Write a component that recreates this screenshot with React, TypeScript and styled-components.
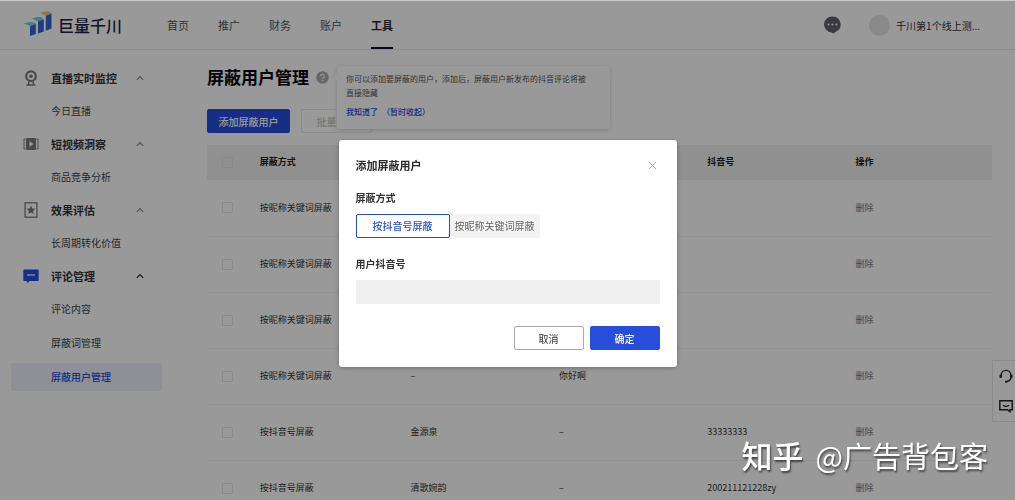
import React, { useState } from 'react';
import styled, { createGlobalStyle } from 'styled-components';

const blue = '#264eda';

const GlobalStyle = createGlobalStyle`
  *, *::before, *::after { box-sizing: border-box; }
  html, body { margin: 0; padding: 0; }
  body, button, input {
    font-family: "Noto Sans CJK SC", "Noto Sans", sans-serif;
  }
  body { background: #fff; color: #333; }
  button { padding: 0; border: 0; background: none; color: inherit; cursor: pointer; }
  legend { padding: 0; }
  a { color: inherit; text-decoration: none; }
  svg { display: block; }
`;

const Page = styled.div`
  height: 100vh;
  overflow: hidden;
  border-top: 1px solid #c6c8c6;
  display: flex;
  flex-direction: column;
`;

const Header = styled.header`
  flex: none;
  height: 49px;
  padding: 0 35px 0 23px;
  display: flex;
  align-items: center;
  border-bottom: 1px solid #eaeaea;
`;

const Brand = styled.a`
  display: flex;
  align-items: center;
  gap: 5px;
  width: 144px;
  font-size: 16px;
  line-height: 24px;
  font-weight: 500;
  color: #1d2440;
  white-space: nowrap;
`;

const Nav = styled.nav`
  flex: 1;
  align-self: stretch;
  display: flex;
  gap: 29px;
`;

const NavLink = styled.a<{ $active?: boolean }>`
  display: flex;
  align-items: center;
  height: 48px;
  font-size: 11px;
  font-weight: ${(p) => (p.$active ? 700 : 400)};
  color: ${(p) => (p.$active ? '#2a2a2e' : '#555')};
  border-top: 2px solid transparent;
  border-bottom: 2px solid ${(p) => (p.$active ? '#0c1030' : 'transparent')};
`;

const Account = styled.div`
  display: flex;
  align-items: center;
  gap: 6px;
  font-size: 10px;
  color: #333;
`;

const MessageButton = styled.button`
  margin-right: 22px;
`;

const Avatar = styled.span`
  width: 21px;
  height: 21px;
  border-radius: 50%;
  background: #e4e4e4;
`;

const Body = styled.div`
  flex: 1;
  min-height: 0;
  display: flex;
`;

const Sidebar = styled.aside`
  flex: none;
  width: 162px;
  padding: 12px 0 0 11px;
`;

const GroupTitle = styled.button`
  width: 100%;
  height: 32px;
  padding: 0 18px 0 12px;
  display: flex;
  align-items: center;
  gap: 12px;
  font-size: 11px;
  font-weight: 700;
  color: #33353a;
`;

const GroupLabel = styled.span`
  flex: 1;
  text-align: left;
`;

const SideLink = styled.a<{ $active?: boolean }>`
  display: flex;
  align-items: center;
  height: 28px;
  margin: 3px 0;
  padding: 0 0 2px 40px;
  border-radius: 2px;
  font-size: 10px;
  font-weight: ${(p) => (p.$active ? 500 : 400)};
  color: ${(p) => (p.$active ? blue : '#444')};
  background: ${(p) => (p.$active ? '#eeeffb' : 'transparent')};

  & + & { margin-top: 6px; }
`;

const Main = styled.main`
  flex: 1;
  min-width: 0;
  padding: 14px 23px 0 45px;
`;

const TitleRow = styled.div`
  position: relative;
  display: flex;
  align-items: center;
  gap: 7px;
  height: 26px;
`;

const Title = styled.h1`
  margin: 0;
  font-size: 17px;
  line-height: 26px;
  color: #000;
`;

const Tip = styled.div`
  position: absolute;
  z-index: 1;
  top: 2px;
  left: 130px;
  width: 273px;
  height: 63px;
  padding: 6px 9px;
  border-radius: 2px;
  background: #fff;
  box-shadow: 0 1px 4px rgba(0, 0, 0, 0.18);
  font-size: 8px;
  color: #555;

  &::before {
    content: '';
    position: absolute;
    left: -3px;
    top: 8px;
    width: 6px;
    height: 6px;
    background: #fff;
    box-shadow: -1px 1px 1px rgba(0, 0, 0, 0.06);
    transform: rotate(45deg);
  }
`;

const TipText = styled.p`
  margin: 0 0 6px;
  line-height: 14px;
`;

const TipActions = styled.div`
  display: flex;
  gap: 4px;
  line-height: 12px;
  color: ${blue};

  button { font-size: 8px; font-weight: 500; line-height: 12px; }
`;

const Actions = styled.div`
  display: flex;
  gap: 11px;
  margin: 19px 0 12px;
`;

const Button = styled.button<{ $kind: 'primary' | 'plain' | 'disabled'; $width: number }>`
  width: ${(p) => p.$width}px;
  height: 24px;
  border-radius: 2px;
  font-size: 10px;
  font-weight: ${(p) => (p.$kind === 'primary' ? 500 : 400)};
  color: ${(p) => ({ primary: '#fff', plain: '#333', disabled: '#bbb' })[p.$kind]};
  background: ${(p) => (p.$kind === 'primary' ? blue : '#fff')};
  border: 1px solid ${(p) => ({ primary: blue, plain: '#aaa', disabled: '#e8e8e8' })[p.$kind]};
`;

const Table = styled.table`
  width: 100%;
  table-layout: fixed;
  border-collapse: collapse;
  font-size: 9px;
  line-height: 14px;
  color: #333;
`;

const HeadCell = styled.th`
  height: 35px;
  padding: 0 12px 2px;
  text-align: left;
  color: #222;
  background: #f0f0f0;

  &:first-child { padding: 0 15px; }
`;

const Cell = styled.td`
  height: 56px;
  padding: 0 12px;
  border-bottom: 1px solid #efefef;

  &:first-child { padding: 0 15px; }
`;

const Checkbox = styled.input.attrs({ type: 'checkbox' })`
  appearance: none;
  display: block;
  width: 11px;
  height: 11px;
  margin: 0;
  border: 1px solid #e4e4e4;
  border-radius: 1px;
`;

const DeleteButton = styled.button`
  font-size: 9px;
  line-height: 14px;
  color: #777;
`;

const FloatBar = styled.div`
  position: fixed;
  right: 0;
  top: 360px;
  width: 23px;
  height: 62px;
  padding: 8px 2px 8px 5px;
  display: flex;
  flex-direction: column;
  align-items: center;
  justify-content: space-between;
  background: #fff;
  border: 1px solid #e6e6e6;
  border-right: 0;
`;

const Overlay = styled.div`
  position: fixed;
  z-index: 10;
  inset: 1px 0 0;
  display: flex;
  justify-content: center;
  align-items: flex-start;
  padding-top: 139px;
  background: rgba(0, 0, 0, 0.4);
`;

const Dialog = styled.form`
  width: 338px;
  max-width: 100%;
  padding: 17px;
  border-radius: 3px;
  background: #fff;
  box-shadow: 0 1px 4px rgba(0, 0, 0, 0.3);
`;

const DialogHead = styled.div`
  display: flex;
  justify-content: space-between;
  align-items: center;
  height: 18px;
  padding: 0 3px 2px 0;
`;

const DialogTitle = styled.h2`
  margin: 0;
  font-size: 11px;
  line-height: 18px;
  font-weight: 700;
  color: #2a2a2a;
`;

const Field = styled.fieldset`
  min-width: 0;
  margin: 15px 0 18px;
  padding: 0;
  border: 0;
`;

const FieldLabel = styled.label`
  display: block;
  margin-bottom: 8px;
  font-size: 10px;
  line-height: 16px;
  font-weight: 700;
  color: #333;
`;

const Segments = styled.div`
  display: inline-flex;
  vertical-align: top;
  border-radius: 2px;
  background: #f3f3f3;
`;

const Segment = styled.button<{ $active: boolean }>`
  height: 24px;
  padding: 0 ${(p) => (p.$active ? 16 : 4)}px 2px;
  border-radius: 2px;
  border: 1px solid ${(p) => (p.$active ? blue : 'transparent')};
  font-size: 10px;
  font-weight: ${(p) => (p.$active ? 500 : 400)};
  color: ${(p) => (p.$active ? blue : '#666')};
  background: ${(p) => (p.$active ? '#fff' : 'transparent')};
`;

const TextInput = styled.input`
  display: block;
  width: 100%;
  height: 24px;
  padding: 0 8px;
  border: 0;
  border-radius: 2px;
  font-size: 10px;
  color: #333;
  background: #f0f0f0;
  outline: none;
`;

const DialogFoot = styled.div`
  display: flex;
  justify-content: flex-end;
  gap: 6px;
  margin-top: 22px;
`;

const Watermark = styled.div`
  position: fixed;
  z-index: 20;
  right: 27px;
  bottom: 22px;
  display: flex;
  align-items: center;
  gap: 12px;
  font-size: 29px;
  line-height: 46px;
  color: #fff;
  white-space: nowrap;
  text-shadow: 1px 2px 2px rgba(0, 0, 0, 0.55);
`;

const WatermarkSite = styled.span`
  font-size: 31px;
  font-weight: 500;
`;

const LogoMark = () => (
  <svg width="30" height="28" viewBox="0 0 30 28" aria-hidden="true">
    <path d="M1 12.5 5.5 11 11 11.4 13 13 7.5 15Z" fill="#6fd6cb" />
    <path d="M9 7.6 13.5 6 18.5 6.3 20.8 8.4 15.4 10.6Z" fill="#6fd6cb" />
    <path d="M17 2 21.5.4 26.5.8 28.4 2.6 23 4.8Z" fill="#f3c968" />
    <path d="M7 15.2 12.8 13V23L7 25Z" fill="#3564d6" />
    <path d="M15 10.6 20.8 8.4V20.6L15 22.6Z" fill="#3564d6" />
    <path d="M22.8 4.8 28.5 2.6V17.6L22.8 19.8Z" fill="#3564d6" />
  </svg>
);

const MessageIcon = () => (
  <svg width="17" height="18" viewBox="0 0 17 18" aria-hidden="true">
    <path d="M8.5.5a8 8 0 0 1 3.8 15.1L9.2 17.6 7.6 16.5A8 8 0 0 1 8.5.5Z" fill="#62636f" />
    <g fill="#fff">
      <circle cx="4.5" cy="8.5" r="1" />
      <circle cx="8.5" cy="8.5" r="1" />
      <circle cx="12.5" cy="8.5" r="1" />
    </g>
  </svg>
);

const CameraIcon = () => (
  <svg width="16" height="16" viewBox="0 0 16 16" fill="none" stroke="#7b7b7b" aria-hidden="true">
    <circle cx="8" cy="6.2" r="4.8" strokeWidth="2.2" />
    <circle cx="8" cy="6.2" r="1.8" fill="#7b7b7b" stroke="none" />
    <path d="M6.2 11 5.4 14.5M9.8 11l.8 3.5M3.5 15h9" strokeWidth="1.4" />
  </svg>
);

const VideoIcon = () => (
  <svg width="16" height="16" viewBox="0 0 16 16" aria-hidden="true">
    <rect x="3" y="2" width="10" height="12" rx="1" fill="#7b7b7b" />
    <path d="M2.5 3H1v10h1.5M13.5 3H15v10h-1.5" fill="none" stroke="#7b7b7b" />
    <path d="m6.5 5.3 4 2.7-4 2.7Z" fill="#fff" />
  </svg>
);

const StarIcon = () => (
  <svg width="16" height="16" viewBox="0 0 16 16" aria-hidden="true">
    <rect x="2.1" y=".8" width="11.8" height="14.4" fill="none" stroke="#7b7b7b" strokeWidth="1.3" />
    <path d="m8 3.6 1.3 2.8 3 .4-2.2 2.1.6 3L8 10.5l-2.7 1.4.6-3-2.2-2.1 3-.4Z" fill="#7b7b7b" />
  </svg>
);

const CommentIcon = () => (
  <svg width="16" height="16" viewBox="0 0 16 16" aria-hidden="true">
    <path d="M1 1.500h14q.7 0 .7.7v10q0 .7-.7.7H6.800L4.500 15 3.500 12.900H1q-.7 0-.7-.7v-10q0-.7.7-.7Z" fill={blue} />
    <path d="M4 7h8" stroke="#fff" strokeWidth="1.2" />
  </svg>
);

const Caret = ({ dark }: { dark?: boolean }) => (
  <svg width="8" height="6" viewBox="0 0 8 6" fill="none" stroke={dark ? '#222' : '#888'} aria-hidden="true">
    <path d="M.8 4.8 4 1.6l3.2 3.2" strokeWidth="1.1" />
  </svg>
);

const HelpIcon = () => (
  <svg width="13" height="13" viewBox="0 0 13 13" aria-hidden="true">
    <circle cx="6.5" cy="6.5" r="6.2" fill="#aaa" />
    <path d="M4.600 5.200a1.900 1.900 0 1 1 2.700 1.700q-.8.400-.8 1.100" fill="none" stroke="#fff" strokeWidth="1.2" />
    <circle cx="6.5" cy="9.7" r=".8" fill="#fff" />
  </svg>
);

const HeadsetIcon = () => (
  <svg width="14" height="14" viewBox="0 0 14 14" fill="none" stroke="#20222c" aria-hidden="true">
    <path d="M2.2 8.500V6.200a4.800 4.800 0 0 1 9.600 0v2.300q0 3.200-3.800 4" strokeWidth="1.4" />
    <path d="M1.500 5.800v3M12.500 5.800v3" strokeWidth="2" />
    <path d="M6 12.700h2.300" strokeWidth="1.8" />
  </svg>
);

const FeedbackIcon = () => (
  <svg width="14" height="14" viewBox="0 0 14 14" fill="none" stroke="#20222c" aria-hidden="true">
    <path d="M.8 1.700h12.400v9H11v2L8.500 10.700H.8Z" strokeWidth="1.4" />
    <path d="M4 6.200q3 2.200 6 0" strokeWidth="1.3" />
  </svg>
);

const CloseIcon = () => (
  <svg width="9" height="9" viewBox="0 0 9 9" stroke="#aaa" aria-hidden="true">
    <path d="m1 1 7 7M8 1 1 8" />
  </svg>
);

const navItems = ['首页', '推广', '财务', '账户', '工具'];

const groups = [
  { title: '直播实时监控', icon: <CameraIcon />, items: ['今日直播'] },
  { title: '短视频洞察', icon: <VideoIcon />, items: ['商品竞争分析'] },
  { title: '效果评估', icon: <StarIcon />, items: ['长周期转化价值'] },
  { title: '评论管理', icon: <CommentIcon />, items: ['评论内容', '屏蔽词管理', '屏蔽用户管理'] },
];

const columns = ['屏蔽方式', '', '', '抖音号', '操作'];
const columnWidths = ['5.2%', '19.2%', '18.9%', '18.9%', '18.9%', '18.9%'];

const rows = [
  ['按昵称关键词屏蔽', '', '', ''],
  ['按昵称关键词屏蔽', '', '', ''],
  ['按昵称关键词屏蔽', '', '', ''],
  ['按昵称关键词屏蔽', '–', '你好啊', ''],
  ['按抖音号屏蔽', '金源泉', '–', '33333333'],
  ['按抖音号屏蔽', '清歌婉韵', '–', '200211121228zy'],
];

const modes = ['按抖音号屏蔽', '按昵称关键词屏蔽'];

export default function App() {
  const [mode, setMode] = useState(modes[0]);

  return (
    <>
      <GlobalStyle />
      <Page>
        <Header>
          <Brand href="#">
            <LogoMark />
            巨量千川
          </Brand>
          <Nav>
            {navItems.map((item) => (
              <NavLink key={item} href="#" $active={item === '工具'}>
                {item}
              </NavLink>
            ))}
          </Nav>
          <Account>
            <MessageButton type="button" aria-label="消息">
              <MessageIcon />
            </MessageButton>
            <Avatar />
            千川第1个线上测...
          </Account>
        </Header>

        <Body>
          <Sidebar>
            {groups.map((group) => (
              <section key={group.title}>
                <GroupTitle type="button">
                  {group.icon}
                  <GroupLabel>{group.title}</GroupLabel>
                  <Caret dark={group.title === '评论管理'} />
                </GroupTitle>
                {group.items.map((item) => (
                  <SideLink key={item} href="#" $active={item === '屏蔽用户管理'}>
                    {item}
                  </SideLink>
                ))}
              </section>
            ))}
          </Sidebar>

          <Main>
            <TitleRow>
              <Title>屏蔽用户管理</Title>
              <HelpIcon />
              <Tip>
                <TipText>
                  你可以添加要屏蔽的用户，添加后，屏蔽用户新发布的抖音评论将被
                  <br />
                  直接隐藏
                </TipText>
                <TipActions>
                  <button type="button">我知道了</button>
                  <button type="button">（暂时收起）</button>
                </TipActions>
              </Tip>
            </TitleRow>
            <Actions>
              <Button type="button" $kind="primary" $width={83}>
                添加屏蔽用户
              </Button>
              <Button type="button" $kind="disabled" $width={71} disabled>
                批量删除
              </Button>
            </Actions>
            <Table>
              <colgroup>
                {columnWidths.map((width, i) => (
                  <col key={i} width={width} />
                ))}
              </colgroup>
              <thead>
                <tr>
                  <HeadCell>
                    <Checkbox aria-label="全选" />
                  </HeadCell>
                  {columns.map((name, i) => (
                    <HeadCell key={i}>{name}</HeadCell>
                  ))}
                </tr>
              </thead>
              <tbody>
                {rows.map((row, i) => (
                  <tr key={i}>
                    <Cell>
                      <Checkbox aria-label="选择" />
                    </Cell>
                    {row.map((value, j) => (
                      <Cell key={j}>{value}</Cell>
                    ))}
                    <Cell>
                      <DeleteButton type="button">删除</DeleteButton>
                    </Cell>
                  </tr>
                ))}
              </tbody>
            </Table>
          </Main>
        </Body>
        <FloatBar>
          <button type="button" aria-label="客服">
            <HeadsetIcon />
          </button>
          <button type="button" aria-label="反馈">
            <FeedbackIcon />
          </button>
        </FloatBar>
      </Page>

      <Overlay>
        <Dialog role="dialog" aria-labelledby="dialog-title" onSubmit={(e) => e.preventDefault()}>
          <DialogHead>
            <DialogTitle id="dialog-title">添加屏蔽用户</DialogTitle>
            <button type="button" aria-label="关闭">
              <CloseIcon />
            </button>
          </DialogHead>
          <Field>
            <FieldLabel as="legend">屏蔽方式</FieldLabel>
            <Segments>
              {modes.map((item) => (
                <Segment key={item} type="button" $active={item === mode} onClick={() => setMode(item)}>
                  {item}
                </Segment>
              ))}
            </Segments>
          </Field>
          <FieldLabel htmlFor="douyin-id">用户抖音号</FieldLabel>
          <TextInput id="douyin-id" type="text" />
          <DialogFoot>
            <Button type="button" $kind="plain" $width={70}>
              取消
            </Button>
            <Button type="submit" $kind="primary" $width={70}>
              确定
            </Button>
          </DialogFoot>
        </Dialog>
      </Overlay>

      <Watermark>
        <WatermarkSite>知乎</WatermarkSite>
        <span>@广告背包客</span>
      </Watermark>
    </>
  );
}
